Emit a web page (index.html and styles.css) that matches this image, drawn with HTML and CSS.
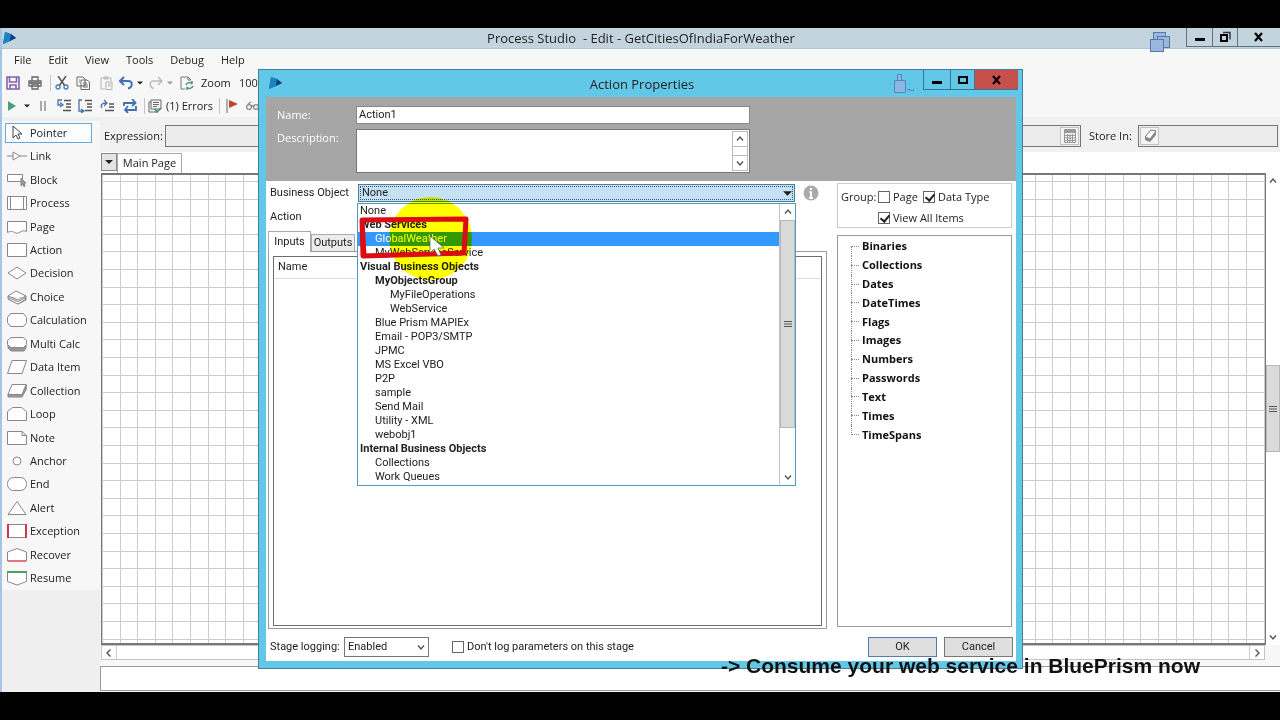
FILE: index.html
```html
<!DOCTYPE html>
<html lang="en">
<head>
<meta charset="utf-8">
<title>Process Studio</title>
<link rel="stylesheet" href="styles.css">
</head>
<body>
<svg width="0" height="0" class="defs" aria-hidden="true">
  <defs>
    <symbol id="logo" viewBox="0 0 14 14"><path d="M3 1 9 3 14 7 8 10 1 13Z" fill="#1769a8"/><path d="M3 1 9 3 8 10 1 13Z" fill="#1f82c2"/><path d="M9 3 14 7 8 10Z" fill="#0f3f78"/></symbol>
    <symbol id="down" viewBox="0 0 10 10"><path d="M2 3.5 5 7 8 3.5" fill="none" stroke="#555" stroke-width="1.4"/></symbol>
    <symbol id="up" viewBox="0 0 10 10"><path d="M2 6.5 5 3 8 6.5" fill="none" stroke="#555" stroke-width="1.4"/></symbol>
    <symbol id="left" viewBox="0 0 10 10"><path d="M6.5 1.5 3 5 6.5 8.5" fill="none" stroke="#555" stroke-width="1.4"/></symbol>
    <symbol id="right" viewBox="0 0 10 10"><path d="M3.5 1.5 7 5 3.5 8.5" fill="none" stroke="#555" stroke-width="1.4"/></symbol>
    <symbol id="tri" viewBox="0 0 8 8"><path d="M0 2h8L4 6Z" fill="currentColor"/></symbol>
    <symbol id="lines" viewBox="0 0 8 8"><path d="M0 1.5h8M0 4h8M0 6.500h8" stroke="#555" stroke-width="1.2"/></symbol>
  </defs>
</svg>
<main class="window">
  <header class="titlebar">
    <svg class="logo"><use href="#logo"/></svg>
    <h1>Process Studio&nbsp; - Edit - GetCitiesOfIndiaForWeather</h1>
    <svg class="stack" viewBox="0 0 20 20"><g fill="#9ab8dd" stroke="#5579a8"><rect x="3.5" y=".5" width="12" height="10"/><rect x="7.5" y="4.5" width="12" height="11"/><rect x=".5" y="7.5" width="13" height="12"/></g></svg>
    <div class="winbtns">
      <button aria-label="Minimize"><svg viewBox="0 0 12 12"><path d="M1 8.500h10" stroke="#000" stroke-width="3"/></svg></button>
      <button aria-label="Restore"><svg viewBox="0 0 12 12"><path d="M4 1.500h7v7" fill="none" stroke="#334" stroke-width="1.5"/><rect x="2" y="4" width="6" height="6" fill="none" stroke="#000" stroke-width="2"/></svg></button>
      <button aria-label="Close"><svg viewBox="0 0 12 12"><path d="m2 2 7 8M9 2l-7 8" stroke="#000" stroke-width="2.2"/></svg></button>
    </div>
  </header>
  <nav class="menu"><a href="#">File</a><a href="#">Edit</a><a href="#">View</a><a href="#">Tools</a><a href="#">Debug</a><a href="#">Help</a></nav>
  <div class="toolbar first">
    <button aria-label="Save"><svg viewBox="0 0 14 14"><path d="M1 1h12v12H1ZM3.500 1v5h7V1M4 13V9h6v4" fill="none" stroke="#8560a8" stroke-width="1.6"/></svg></button>
    <button aria-label="Print"><svg viewBox="0 0 14 14"><path d="M4 5V1h6v4M1 5h12v5H1ZM4 8h6v5H4Z" fill="none" stroke="#666" stroke-width="1.3"/><path d="M1 6h12v2H1Z" fill="#777"/></svg></button>
    <i class="sep"></i>
    <button aria-label="Cut"><svg viewBox="0 0 14 14"><path d="m3 0 7 10M11 0 4 10" stroke="#555" stroke-width="1.5"/><g fill="none" stroke="#4e7fc0" stroke-width="1.4"><circle cx="3" cy="11" r="2"/><circle cx="11" cy="11" r="2"/></g></svg></button>
    <button aria-label="Copy"><svg viewBox="0 0 14 14"><g fill="#fff" stroke="#666"><path d="M1 1h6l2 2v7H1ZM5 4h6l2.500 2v7.500H5Z"/><path d="M3 4h1M3 6h1M7 7h4M7 9h5M7 11h5"/></g></svg></button>
    <button aria-label="Paste"><svg viewBox="0 0 14 14"><g fill="none" stroke="#b5b5b5"><path d="M5 13H1V2h10v3M4 1h4v2H4ZM6 6h6v7.500H6ZM8 8h3M8 10h3"/></g></svg></button>
    <button aria-label="Undo"><svg viewBox="0 0 14 14"><path d="M1 5h8c5 0 5 6 0 7.500M5 1 1 5l4 4" fill="none" stroke="#3e70b2" stroke-width="2"/></svg></button>
    <button aria-label="Undo list"><svg class="s"><use href="#tri"/></svg></button>
    <button aria-label="Redo"><svg viewBox="0 0 14 14"><path d="M13 5H5c-5 0-5 6 0 7.500M9 1l4 4-4 4" fill="none" stroke="#bbb" stroke-width="1.5"/></svg></button>
    <button aria-label="Redo list" class="dim"><svg class="s"><use href="#tri"/></svg></button>
    <button aria-label="Refresh page"><svg viewBox="0 0 14 14"><path d="M5 13H1V1h7l3 3M8 1v3h3" fill="none" stroke="#777"/><path d="M6 9c1-3 5-3 6-1V5M13 10c-1 3-5 3-6 1v3" fill="none" stroke="#4f8c86" stroke-width="1.5"/></svg></button>
    <span>Zoom</span><span>100%</span>
  </div>
  <div class="toolbar second">
    <button aria-label="Run"><svg viewBox="0 0 14 14"><path d="m1 2 8 5-8 5Z" fill="#4aa080"/></svg></button>
    <button aria-label="Run options"><svg class="s"><use href="#tri"/></svg></button>
    <button aria-label="Pause"><svg viewBox="0 0 14 14"><path d="M2 2v10M6 2v10" stroke="#aaa" stroke-width="2"/></svg></button>
    <button aria-label="Step"><svg viewBox="0 0 14 14"><path d="M5 1H1v5h3M3 3.500 6 6 3 8" fill="none" stroke="#4772ad" stroke-width="1.3"/><path d="M7 1.500h7M9 5h5M9 8h5M6 11.500h8" stroke="#555" stroke-width="1.3"/></svg></button>
    <button aria-label="Step over"><svg viewBox="0 0 14 14"><path d="M4 1H1v11h4M3 10l3 2-3 2" fill="none" stroke="#4772ad" stroke-width="1.3"/><path d="M7 1.500h7M9 5h5M9 8h5M7 11.500h7" stroke="#555" stroke-width="1.3"/></svg></button>
    <button aria-label="Step out"><svg viewBox="0 0 14 14"><path d="M2 9c-2-3 0-5 4-5M4 1l3 3-3 3" fill="none" stroke="#4772ad" stroke-width="1.3"/><path d="M9 5h5M9 8h5M5 11.500h9" stroke="#555" stroke-width="1.3"/></svg></button>
    <button aria-label="Reset"><svg viewBox="0 0 14 14"><path d="M1 7V4h11M9 0l3.500 4L9 7M13 7v4H2M5 7l-3 4 3 3" fill="none" stroke="#3e70b2" stroke-width="1.8"/></svg></button>
    <i class="sep"></i>
    <button aria-label="Validate"><svg viewBox="0 0 14 14"><path d="M3 1h10v9H3ZM3 3H1v10h8M5 3.500h6M5 5.500h6M5 7.500h4" fill="none" stroke="#666"/><path d="m7 10 2 3 4-4" fill="none" stroke="#3f9070" stroke-width="1.6"/></svg></button>
    <span>(1) Errors</span>
    <i class="sep"></i>
    <button aria-label="Breakpoint"><svg viewBox="0 0 14 14"><path d="M1 0v14" stroke="#666"/><path d="m3 1 9 4-9 4Z" fill="#c0452f"/></svg></button>
    <button aria-label="Watch"><svg viewBox="0 0 14 14"><g fill="none" stroke="#888" stroke-width="1.3"><circle cx="3" cy="8" r="2.4"/><circle cx="10" cy="8" r="2.4"/><path d="M5 7h3M2 5l3-2"/></g></svg></button>
  </div>
  <div class="main">
    <aside class="tools">
      <div class="toollist">
      <button class="on"><svg viewBox="0 0 20 16"><path d="M6 1v12l3-3 2 4 2-1-2-4h4Z" fill="#fff" stroke="#444"/></svg>Pointer</button>
      <button><svg viewBox="0 0 20 16"><path d="M0 8h6M13 8h7M6 4l7 4-7 4Z"/></svg>Link</button>
      <button><svg viewBox="0 0 20 16"><path d="M.5 2.500h15v7H.5Z"/><path d="M14 6v8l2-2 1 3 1-1-1-3h2Z" fill="#999"/></svg>Block</button>
      <button><svg viewBox="0 0 20 16"><path d="M.5 1.500h19v13H.5ZM3.500 1.500v13M16.500 1.500v13"/></svg>Process</button>
      <button><svg viewBox="0 0 20 16"><path d="M.5 2.500h19v10c-5-3-8 4-12 1-3-2-5-1-7 0Z"/></svg>Page</button>
      <button><svg viewBox="0 0 20 16"><path d="M.5 1.500h19v13H.5Z"/></svg>Action</button>
      <button><svg viewBox="0 0 20 16"><path d="M1 8 10 2l9 6-9 6Z"/></svg>Decision</button>
      <button><svg viewBox="0 0 20 16"><path d="m1 10 10 5 8-4V7L8 8Z" fill="#aaa"/><path d="m1 7 8-5 10 5-8 4ZM1 7v3l10 5 8-5M1 8.500l10 4 8-4"/></svg>Choice</button>
      <button><svg viewBox="0 0 20 16"><path d="M4 1.500h12q2 1 3.500 4v5q-1.500 3-3.500 4H4q-2-1-3.500-4v-5q1.500-3 3.500-4Z"/></svg>Calculation</button>
      <button><svg viewBox="0 0 20 16"><path d="M1 8v4l3 3h13l2-3V8Z" fill="#999"/><path d="M4 1.500h12l3.500 3v4l-3 3H4l-3.500-3v-4Z"/></svg>Multi Calc</button>
      <button><svg viewBox="0 0 20 16"><path d="M5 1.500h14.500L15 14.500H.5Z"/></svg>Data Item</button>
      <button><svg viewBox="0 0 20 16"><path d="M1 11v3h14l5-9V2Z" fill="#999"/><path d="M5 1.500h14L15 11.500H1Z"/></svg>Collection</button>
      <button><svg viewBox="0 0 20 16"><path d="M.5 14.500v-9l5-4h9l5 4v9Z"/></svg>Loop</button>
      <button><svg viewBox="0 0 20 16"><path d="M.5 1.500H15l4.500 4v9H.5ZM15 1.500v4h4.500"/></svg>Note</button>
      <button><svg viewBox="0 0 20 16"><circle cx="10" cy="8" r="4"/></svg>Anchor</button>
      <button><svg viewBox="0 0 20 16"><rect x=".5" y="1.5" width="19" height="13" rx="6"/></svg>End</button>
      <button><svg viewBox="0 0 20 16"><path d="m10 1.500 9 13H1Z"/></svg>Alert</button>
      <button><svg viewBox="0 0 20 16"><path d="M1 1.500h18v13H1Z"/><path d="M1 1v14M19 1v14" stroke="#d9354a" stroke-width="2"/></svg>Exception</button>
      <button><svg viewBox="0 0 20 16"><path d="M.5 14V5L10 1.500 19.500 5v9Z"/><path d="M1 14h18" stroke="#dd7780" stroke-width="2"/></svg>Recover</button>
      <button><svg viewBox="0 0 20 16"><path d="M.5 2v9.500L10 15l9.500-3.500V2Z"/><path d="M0 2h20" stroke="#559966" stroke-width="2"/></svg>Resume</button>
      </div>
    </aside>
    <section class="work">
      <div class="expr">
        <label for="ex">Expression:</label>
        <div class="field grow"><input id="ex"><button aria-label="Calculator"><svg viewBox="0 0 14 14"><path d="M2 1h10v3H2Z" fill="#999"/><path d="M1.500.5h11v13h-11ZM2 6.500h10M2 9h10M2 11.500h10M4.500 5v8M7 5v8M9.500 5v8" fill="none" stroke="#999"/></svg></button></div>
        <label for="st">Store In:</label>
        <div class="field store"><button aria-label="Data item"><svg viewBox="0 0 14 14"><path d="m2 8 6-7 5 1-6 8Z" fill="#fff" stroke="#777"/><path d="M2 8v3l5 2 6-7V2L7 10Z" fill="#888"/></svg></button><input id="st"></div>
      </div>
      <div class="tabs"><button aria-label="Pages"><svg><use href="#tri"/></svg></button><span>Main Page</span></div>
      <div class="canvasrow"><div class="canvas"></div>
        <div class="vbar"><svg><use href="#up"/></svg><div class="vthumb"><svg><use href="#lines"/></svg></div><svg><use href="#down"/></svg></div></div>
      <div class="hbar"><span><svg><use href="#left"/></svg></span><span><svg><use href="#right"/></svg></span></div>
      <div class="status"></div>
    </section>
  </div>

  <section class="dialog" role="dialog" aria-labelledby="dt">
    <header class="dtitle">
      <svg class="logo"><use href="#logo"/></svg>
      <h2 id="dt">Action Properties</h2>
      <svg class="stack" viewBox="0 0 20 20"><path d="M3.500 6.500v-6h4v6M.5 6.500h11v12H.5ZM13 15.500h3v1h4v-2" fill="#8ab8e4" stroke="#5385b8"/></svg>
      <div class="winbtns">
        <button aria-label="Minimize"><svg viewBox="0 0 12 12"><path d="M1 8.500h10" stroke="#000" stroke-width="3"/></svg></button>
        <button aria-label="Maximize"><svg viewBox="0 0 12 12"><rect x="2" y="3" width="8" height="6" fill="none" stroke="#000" stroke-width="2"/></svg></button>
        <button aria-label="Close"><svg viewBox="0 0 12 12"><path d="m2 2 7 8M9 2l-7 8" stroke="#000" stroke-width="2.2"/></svg></button>
      </div>
    </header>
    <div class="dbody">
      <div class="dhead">
        <label for="nm">Name:</label><input id="nm" value="Action1">
        <label for="ds">Description:</label>
        <div class="area"><textarea id="ds"></textarea><div class="areabar"><svg><use href="#up"/></svg><svg><use href="#down"/></svg></div></div>
      </div>
      <div class="dcols">
        <div class="dleft">
          <div class="row">
            <label for="bo">Business Object</label>
            <div class="combo">
              <select id="bo"><option>None</option></select><svg class="arrow"><use href="#tri"/></svg>
              <div class="popup">
                <ul role="listbox" aria-label="Business Object">
                  <li>None</li><li class="b">Web Services</li><li class="i1 hot">GlobalWeather</li><li class="i1">MyWebServiceService</li><li class="b">Visual Business Objects</li><li class="b i1">MyObjectsGroup</li><li class="i2">MyFileOperations</li><li class="i2">WebService</li><li class="i1">Blue Prism MAPIEx</li><li class="i1">Email - POP3/SMTP</li><li class="i1">JPMC</li><li class="i1">MS Excel VBO</li><li class="i1">P2P</li><li class="i1">sample</li><li class="i1">Send Mail</li><li class="i1">Utility - XML</li><li class="i1">webobj1</li><li class="b">Internal Business Objects</li><li class="i1">Collections</li><li class="i1">Work Queues</li>
                </ul>
                <div class="pbar"><svg><use href="#up"/></svg><div class="pthumb"><svg><use href="#lines"/></svg></div><svg><use href="#down"/></svg></div>
              </div>
            </div>
            <svg class="info" viewBox="0 0 16 16"><circle cx="8" cy="8" r="7.5" fill="#aaa"/><path d="M8 3v2M8 6.500V13M6.500 7H8M6 13h4" stroke="#fff" stroke-width="2"/></svg>
          </div>
          <div class="row2">Action</div>
          <div class="dtabs"><button class="cur">Inputs</button><button>Outputs</button></div>
          <div class="panel"><div class="grid"><div class="ghead">Name</div></div></div>
        </div>
        <div class="dright">
          <div class="group">
            <span>Group:</span>
            <label><input type="checkbox">Page</label><label><input type="checkbox" checked>Data Type</label>
            <label class="all"><input type="checkbox" checked>View All Items</label>
          </div>
          <div class="tree"><ul><li>Binaries</li><li>Collections</li><li>Dates</li><li>DateTimes</li><li>Flags</li><li>Images</li><li>Numbers</li><li>Passwords</li><li>Text</li><li>Times</li><li>TimeSpans</li></ul></div>
        </div>
      </div>
      <footer class="dfoot">
        <label for="lg">Stage logging:</label>
        <div class="logsel"><select id="lg"><option>Enabled</option></select><svg><use href="#down"/></svg></div>
        <label class="chk"><input type="checkbox">Don't log parameters on this stage</label>
        <button class="ok">OK</button><button>Cancel</button>
      </footer>
    </div>
  </section>
  <div class="spot"></div>
  <svg class="mark" viewBox="0 0 116 48"><path d="M6 6 110 5l-2 34L7 42ZM6 6l2 36" fill="none" stroke="#dc0c14" stroke-width="5" stroke-linejoin="round"/><path d="M74 22v17l4-4 4 7 3-1-3-7h6Z" fill="#fff" stroke="#555" stroke-width=".7"/></svg>
  <p class="caption">-&gt; Consume your web service in BluePrism now</p>
</main>
</body>
</html>
```
FILE: styles.css
```css
* { box-sizing: border-box; }
body { margin: 0; padding: 28px 0; height: 100vh; background: #000; color: #222; font: 11px/14px "Open Sans", sans-serif; overflow: hidden; }
.defs { position: absolute; }
svg { display: block; flex: none; }
button, input, select, textarea { font: inherit; color: inherit; margin: 0; padding: 0; border: 0; background: none; border-radius: 0; appearance: none; outline: 0; }
h1, h2, p, ul { margin: 0; padding: 0; font-weight: 400; list-style: none; }
a { color: inherit; text-decoration: none; }
.window { position: relative; height: 100%; display: flex; flex-direction: column; background: #f7f7f8; border-left: 2px solid #a6c5e4; overflow: hidden; }
.titlebar, .dtitle { display: grid; grid-template-columns: 1fr auto 1fr; align-items: start; line-height: 20px; }
.titlebar { height: 21px; flex: none; background: #c3d4df; border-bottom: 1px solid #b3c4d0; }
.titlebar h1, .dtitle h2 { font-size: 13px; grid-column: 2; grid-row: 1; }
.logo { width: 14px; height: 14px; margin-top: 3px; grid-row: 1; grid-column: 1; }
.stack { width: 20px; height: 20px; grid-column: 3; grid-row: 1; justify-self: end; margin: 4px 110px 0 0; }
.winbtns { grid-column: 3; grid-row: 1; justify-self: end; display: grid; grid-template-columns: 26px 25px 43px; }
.winbtns button { height: 19px; border: 1px solid #62727d; border-top: 0; border-right: 0; display: grid; place-items: center; }
.winbtns svg { width: 12px; height: 12px; }
.menu { display: flex; gap: 17px; padding: 4px 12px; height: 22px; flex: none; }
.toolbar { display: grid; align-items: center; height: 23px; flex: none; overflow: hidden; }
.first { padding-left: 4px; grid-template-columns: 22px 22px 5px 21px 24px 19px 18px 12px 18px 13px 21px 38px 40px; }
.second { padding-left: 5px; grid-template-columns: 17px 15px 18px 21px 22px 23px 21px 4px 18px 53px 7px 20px 20px; white-space: nowrap; }
.toolbar svg { width: 14px; height: 14px; }
.toolbar svg.s { width: 6px; height: 6px; color: #222; }
.toolbar .dim svg.s { color: #999; }
.sep { width: 1px; height: 16px; background: #c4c4c4; }
.main { flex: 1; display: flex; min-height: 0; }
.tools { width: 98px; flex: none; background: #efeff0; padding-top: 4px; }
.toollist { display: grid; grid-auto-rows: 1fr; height: 469px; padding: 0 8px 0 3px; background: #f7f7f8; align-items: center; }
.toollist button { height: 20px; display: flex; align-items: center; gap: 3px; padding: 0 1px; border: 1px solid transparent; text-align: left; white-space: nowrap; }
.toollist .on { border-color: #6aa7dc; background: #fafcfe; }
.toollist svg { width: 20px; height: 16px; fill: #fff; stroke: #888; }
.work { flex: 1; min-width: 0; display: flex; flex-direction: column; }
.expr { height: 35px; flex: none; background: #f1f1f1; display: flex; align-items: center; padding: 2px 2px 0 4px; gap: 7px; }
.expr label { width: 54px; white-space: nowrap; }
.expr .grow + label { width: 42px; margin-left: 1px; }
.field { height: 22px; border: 1px solid #767676; background: #ececec; display: flex; align-items: center; padding: 1px; }
.field input { flex: 1; min-width: 0; }
.field button { width: 19px; height: 18px; border: 1px solid #c2c2c2; display: grid; place-items: center; background: #f4f4f4; }
.field svg { width: 14px; height: 14px; }
.grow { flex: 1; }
.store { width: 140px; }
.tabs { height: 21px; flex: none; display: flex; background: #fff; padding: 1px 1px 0; }
.tabs button { width: 16px; height: 18px; border: 1px solid #888; background: #e4e4e4; display: grid; place-items: center; }
.tabs svg { width: 8px; height: 8px; }
.tabs span { width: 65px; text-align: center; border: 1px solid #aaa; border-bottom: 0; line-height: 18px; }
.canvasrow { flex: 1; display: flex; min-height: 0; padding-left: 1px; }
.canvas { flex: 1; border: 1px solid #777; border-top-width: 2px; border-bottom-width: 2px; background-color: #fff;
  background-image: repeating-linear-gradient(90deg, #ccc 0 1px, transparent 1px 18px, #ccc 18px 19px, transparent 19px 35px, #ccc 35px 36px, transparent 36px 53px, #ccc 53px 54px, transparent 54px 70px, #ccc 70px 71px, transparent 71px 88px),
    repeating-linear-gradient(180deg, transparent 0 6px, #ccc 6px 7px, transparent 7px 24px, #ccc 24px 25px, transparent 25px 41px, #ccc 41px 42px, transparent 42px 59px, #ccc 59px 60px, transparent 60px 76px, #ccc 76px 77px, transparent 77px 88px); }
.vbar { width: 14px; background: #fff; display: grid; grid-template-rows: 16px 1fr 16px; justify-items: center; align-items: center; }
.vbar svg { width: 10px; height: 10px; }
.vthumb { align-self: start; margin-top: 176px; height: 87px; width: 14px; background: #dadada; border: 1px solid #b8b8b8; display: grid; place-items: center; }
.vthumb svg, .pthumb svg { width: 8px; height: 8px; }
.hbar { height: 15px; flex: none; margin: 0 15px 0 1px; border: 1px solid #c4c4c4; background: #fff; display: flex; justify-content: space-between; }
.hbar span { width: 15px; display: grid; place-items: center; border-right: 1px solid #ccc; }
.hbar span + span { border: 0; border-left: 1px solid #ccc; }
.hbar svg { width: 10px; height: 10px; }
.status { height: 25px; flex: none; margin: 6px 0 1px; border: 1px solid #999; border-right: 0; background: #fff; }

.dialog { position: absolute; left: 256px; right: 257px; top: 41px; bottom: 23px; background: #63c8e8; border: 1px solid #427f9c; padding: 0 6px 7px 7px; display: flex; flex-direction: column; font-family: Roboto, Arial, sans-serif; }
.dtitle { height: 27px; flex: none; font-family: "Open Sans", sans-serif; line-height: 28px; margin-right: -2px; }
.dtitle .logo { margin: 6px 0 0 2px; }
.dtitle .stack { margin-right: 104px; }
.dtitle .winbtns { grid-template-columns: 27px 24px 44px; }
.dtitle .winbtns button { height: 20px; border-color: #33789a; }
.dtitle .winbtns button:last-child { background: #c7504d; }
.dbody { flex: 1; min-height: 0; background: #fff; display: flex; flex-direction: column; }
.dhead { height: 84px; flex: none; background: #a6a6a6; color: #fff; font-family: "Open Sans", sans-serif; display: grid; grid-template: 18px 44px / 79px 394px; row-gap: 5px; padding: 9px 0 0 11px; }
.dhead label { padding-top: 2px; }
.dhead input { background: #fff; border: 1px solid #888; color: #222; padding: 0 2px; font-family: Roboto, Arial, sans-serif; }
.area { background: #fff; border: 1px solid #777; display: flex; padding: 1px; }
.area textarea { flex: 1; resize: none; color: #222; }
.areabar { width: 16px; border: 1px solid #bbb; display: flex; flex-direction: column; justify-content: space-between; }
.areabar svg { width: 14px; height: 15px; padding: 2px; border-bottom: 1px solid #bbb; }
.areabar svg + svg { border: 0; border-top: 1px solid #bbb; }
.dcols { flex: 1; min-height: 0; display: flex; gap: 10px; padding: 2px 4px 0 2px; }
.dleft { flex: 1; display: flex; flex-direction: column; }
.row { display: flex; height: 19px; align-items: center; padding-left: 2px; }
.row label { width: 88px; white-space: nowrap; }
.combo { position: relative; flex: 1; height: 18px; }
.combo select { display: block; width: 100%; height: 18px; border: 1px solid #4a7f9c; background: #c4e2f3; padding: 0 3px; outline: 1px dotted #456; outline-offset: -3px; }
.arrow { position: absolute; right: 3px; top: 5px; width: 9px; height: 9px; }
.info { width: 16px; height: 16px; margin: 0 8px; }
.popup { position: absolute; z-index: 2; top: 19px; left: -1px; right: -1px; height: 283px; border: 1px solid #4d9dbb; background: #fff; display: flex; }
.popup ul { flex: 1; display: grid; grid-auto-rows: 1fr; }
.popup li { line-height: 14px; padding-left: 2px; white-space: nowrap; }
.popup .i1 { padding-left: 17px; }
.popup .i2 { padding-left: 32px; }
.b { font-weight: 700; }
.popup .hot { background: #3399ff; color: #fff; }
.pbar { width: 16px; border-left: 1px solid #c4c4c4; display: grid; grid-template-rows: 16px 1fr 16px; justify-items: center; align-items: center; }
.pbar > svg { width: 10px; height: 10px; }
.pthumb { width: 15px; height: 208px; align-self: start; background: #dadada; border: 1px solid #b8b8b8; display: grid; place-items: center; }
.row2 { height: 29px; padding: 8px 2px; }
.dtabs { display: flex; align-items: flex-end; height: 20px; }
.dtabs button { height: 17px; width: 44px; border: 1px solid #aaa; border-bottom: 0; background: #ececec; }
.dtabs .cur { height: 21px; width: 43px; background: #fff; margin-bottom: -1px; position: relative; }
.panel { flex: 1; border: 1px solid #9a9a9a; padding: 4px 4px 2px; }
.grid { height: 100%; border: 1px solid #6e6e6e; }
.ghead { height: 22px; padding: 3px 4px; border-bottom: 1px solid #ddd; }
.dright { width: 175px; flex: none; font-family: "Open Sans", sans-serif; display: flex; flex-direction: column; gap: 7px; padding-bottom: 2px; }
.group { height: 45px; border: 1px solid #ccc; display: grid; grid-template: 21px 21px / 37px 45px 1fr; align-items: center; padding: 2px 0 0 3px; white-space: nowrap; }
.group label, .chk { display: flex; align-items: center; gap: 3px; }
.group .all { grid-column: 2 / 4; }
input[type=checkbox] { position: relative; width: 12px; height: 12px; flex: none; border: 1px solid #666; background: #fff; }
input[type=checkbox]:checked::after { content: ""; position: absolute; left: 3px; top: 0; width: 4px; height: 7px; border: solid #222; border-width: 0 2px 2px 0; transform: rotate(40deg); }
.tree { flex: 1; border: 1px solid #999; padding: 1px 13px; font-weight: 700; color: #111; }
.tree ul { font-weight: 700; height: 207px; display: grid; grid-auto-rows: 1fr; }
.tree li { display: flex; align-items: center; position: relative; }
.tree li::before { content: ""; width: 8px; margin-right: 3px; border-top: 1px dotted #888; }
.tree li::after { content: ""; position: absolute; left: 0; top: 0; bottom: 0; border-left: 1px dotted #888; }
.tree li:first-child::after { top: 50%; }
.tree li:last-child::after { bottom: 50%; }
.dfoot { height: 32px; flex: none; display: flex; align-items: center; padding: 4px 3px 0 4px; }
.dfoot > label:first-child { width: 74px; white-space: nowrap; }
.logsel { position: relative; width: 85px; margin-right: 23px; }
.logsel select { display: block; width: 100%; height: 20px; border: 1px solid #777; padding: 0 3px; }
.logsel svg { position: absolute; right: 3px; top: 5px; width: 10px; height: 10px; }
.chk { flex: 1; }
.dfoot button { width: 69px; height: 20px; border: 1px solid #777; background: #dfdfdf; }
.dfoot .ok { border-color: #4f7eb0; margin-right: 7px; }
.spot { position: absolute; left: 387px; top: 169px; width: 83px; height: 83px; border-radius: 50%; background: #ff0; mix-blend-mode: multiply; z-index: 3; }
.mark { position: absolute; left: 354px; top: 186px; width: 116px; height: 48px; z-index: 4; }
.caption { position: absolute; right: 80px; bottom: 14px; font: 700 21px/24px "Liberation Sans", Arial, sans-serif; color: #111; white-space: nowrap; z-index: 4; }
```
